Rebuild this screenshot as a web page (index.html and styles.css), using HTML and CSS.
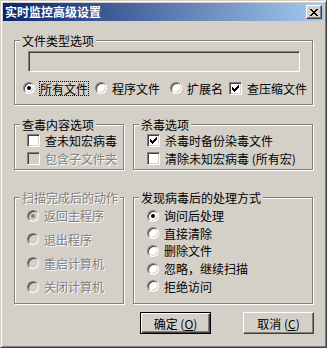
FILE: index.html
```html
<!DOCTYPE html>
<html lang="zh-CN">
<head>
  <meta charset="UTF-8">
  <title>实时监控高级设置</title>
  <link rel="stylesheet" href="styles.css">
</head>
<body>
  <div class="window">
    <div class="titlebar">
      <span class="title">实时监控高级设置</span>
      <span class="close-btn">
        <svg width="8" height="7" viewBox="0 0 8 7" shape-rendering="crispEdges">
          <path fill="#000" d="M0 0h2v1H0z M6 0h2v1H6z M1 1h2v1H1z M5 1h2v1H5z M2 2h4v1H2z M3 3h2v1H3z M2 4h4v1H2z M1 5h2v1H1z M5 5h2v1H5z M0 6h2v1H0z M6 6h2v1H6z"/>
        </svg>
      </span>
    </div>

    <div class="content">
      <!-- file types -->
      <div class="group group-type">
        <div class="group-title">文件类型选项</div>
        <div class="textbox"></div>
        <div class="type-row">
          <div class="option"><span class="radio checked"></span><span class="label focus">所有文件</span></div>
          <div class="option"><span class="radio"></span><span class="label">程序文件</span></div>
          <div class="option"><span class="radio"></span><span class="label">扩展名</span></div>
          <div class="option"><span class="checkbox checked">
            <svg width="7" height="7" viewBox="0 0 7 7" shape-rendering="crispEdges"><path fill="#000" d="M0 2h1v3H0z M1 3h1v3H1z M2 4h1v3H2z M3 3h1v3H3z M4 2h1v3H4z M5 1h1v3H5z M6 0h1v3H6z"/></svg>
          </span><span class="label">查压缩文件</span></div>
        </div>
      </div>

      <div class="row row-mid">
        <div class="group group-left">
          <div class="group-title">查毒内容选项</div>
          <div class="list list-check">
            <div class="item"><span class="checkbox"></span><span>查未知宏病毒</span></div>
            <div class="item disabled"><span class="checkbox"></span><span>包含子文件夹</span></div>
          </div>
        </div>
        <div class="group group-right">
          <div class="group-title">杀毒选项</div>
          <div class="list list-check">
            <div class="item"><span class="checkbox checked">
              <svg width="7" height="7" viewBox="0 0 7 7" shape-rendering="crispEdges"><path fill="#000" d="M0 2h1v3H0z M1 3h1v3H1z M2 4h1v3H2z M3 3h1v3H3z M4 2h1v3H4z M5 1h1v3H5z M6 0h1v3H6z"/></svg>
            </span><span>杀毒时备份染毒文件</span></div>
            <div class="item"><span class="checkbox"></span><span>清除未知宏病毒 (所有宏)</span></div>
          </div>
        </div>
      </div>

      <div class="row row-bottom">
        <div class="group group-left disabled">
          <div class="group-title">扫描完成后的动作</div>
          <div class="list list-after">
            <div class="item"><span class="radio checked"></span><span>返回主程序</span></div>
            <div class="item"><span class="radio"></span><span>退出程序</span></div>
            <div class="item"><span class="radio"></span><span>重启计算机</span></div>
            <div class="item"><span class="radio"></span><span>关闭计算机</span></div>
          </div>
        </div>
        <div class="group group-right">
          <div class="group-title">发现病毒后的处理方式</div>
          <div class="list list-found">
            <div class="item"><span class="radio checked"></span><span>询问后处理</span></div>
            <div class="item"><span class="radio"></span><span>直接清除</span></div>
            <div class="item"><span class="radio"></span><span>删除文件</span></div>
            <div class="item"><span class="radio"></span><span>忽略，继续扫描</span></div>
            <div class="item"><span class="radio"></span><span>拒绝访问</span></div>
          </div>
        </div>
      </div>

      <div class="buttons">
        <div class="btn default">确定 (<u>O</u>)</div>
        <div class="btn">取消 (<u>C</u>)</div>
      </div>
    </div>
  </div>
</body>
</html>
```

FILE: styles.css
```css
body {
  margin: 0;
  background: #d4d0c8;
  font-family: "Noto Sans CJK SC", "Liberation Sans", sans-serif;
  font-size: 12px;
  color: #000;
}
.window {
  width: 327px;
  height: 348px;
  box-sizing: border-box;
  padding: 2px;
  background: #d4d0c8;
  border: 1px solid;
  border-color: #d4d0c8 #404040 #404040 #d4d0c8;
  box-shadow: inset 1px 1px #fff, inset -1px -1px #808080;
}
.titlebar {
  height: 18px;
  display: flex;
  align-items: center;
  justify-content: space-between;
  background: linear-gradient(to right, #0a246a, #a6caf0);
}
.title {
  color: #fff;
  font-weight: bold;
  line-height: 18px;
  padding-left: 2px;
}
.close-btn {
  width: 16px;
  height: 14px;
  box-sizing: border-box;
  margin-right: 2px;
  display: flex;
  align-items: center;
  justify-content: center;
  background: #d4d0c8;
  border: 1px solid;
  border-color: #fff #404040 #404040 #fff;
  box-shadow: inset -1px -1px #808080;
}
.content {
  padding: 0 11px;
}

/* etched group box */
.group {
  box-sizing: border-box;
  border: 1px solid #808080;
  box-shadow: inset 1px 1px #fff, 1px 1px #fff;
}
.group-title {
  width: fit-content;
  margin: -8px 0 0 5px;
  padding: 0 2px;
  line-height: 15px;
  background: #d4d0c8;
}
.group-type {
  height: 65px;
  margin-top: 19px;
}
.textbox {
  width: 272px;
  height: 21px;
  box-sizing: border-box;
  margin: 3px 0 0 13px;
  border: 1px solid;
  border-color: #808080 #fff #fff #808080;
  box-shadow: inset 1px 1px #404040, inset -1px -1px #d4d0c8;
}
.type-row {
  display: grid;
  grid-template-columns: 72px 75px 59px auto;
  height: 16px;
  margin: 8px 0 0 8px;
}
.option {
  display: flex;
  align-items: center;
  gap: 4px;
}
.label {
  border: 1px solid transparent;
  line-height: 13px;
}
.label.focus {
  border: 1px dotted #000;
}

.row {
  display: flex;
  gap: 9px;
}
.group-left { width: 110px; }
.group-right { width: 180px; }
.row-mid {
  margin-top: 19px;
}
.row-mid .group { height: 46px; }
.row-bottom {
  margin-top: 27px;
}
.row-bottom .group { height: 107px; }

.list { margin-left: 12px; }
.group-right .list { margin-left: 13px; }
.item {
  display: flex;
  align-items: center;
  gap: 5px;
}
.list-check { margin-top: -1px; }
.list-check .item { height: 18px; }
.list-after { margin-top: -1px; }
.list-after .item { height: 23.67px; }
.list-found { margin-top: 2px; }
.list-found .item { height: 17.6px; }

.radio {
  width: 12px;
  height: 12px;
  flex: none;
  box-sizing: border-box;
  display: flex;
  align-items: center;
  justify-content: center;
  border-radius: 50%;
  background: #fff;
  border: 1px solid;
  border-color: #808080 #fff #fff #808080;
  box-shadow: inset 1px 1px #404040, inset -1px -1px #d4d0c8;
}
.radio.checked::after {
  content: "";
  width: 4px;
  height: 4px;
  border-radius: 50%;
  background: #000;
}
.checkbox {
  width: 13px;
  height: 13px;
  flex: none;
  box-sizing: border-box;
  display: flex;
  align-items: center;
  justify-content: center;
  background: #fff;
  border: 1px solid;
  border-color: #808080 #fff #fff #808080;
  box-shadow: inset 1px 1px #404040, inset -1px -1px #d4d0c8;
}

.disabled .group-title,
.item.disabled,
.disabled .item {
  color: #808080;
  text-shadow: 1px 1px #fff;
}
.disabled .checkbox,
.disabled .radio { background: #d4d0c8; }
.disabled .radio.checked::after { background: #808080; }

.buttons {
  display: flex;
  justify-content: flex-end;
  gap: 32px;
  margin: 8px -1px 0 0;
}
.btn {
  width: 71px;
  height: 22px;
  box-sizing: border-box;
  display: flex;
  align-items: center;
  justify-content: center;
  background: #d4d0c8;
  border: 1px solid;
  border-color: #fff #404040 #404040 #fff;
  box-shadow: inset -1px -1px #808080;
}
.btn.default {
  border-color: #000;
  box-shadow: inset 1px 1px #fff, inset -1px -1px #404040, inset -2px -2px #808080;
}
```
